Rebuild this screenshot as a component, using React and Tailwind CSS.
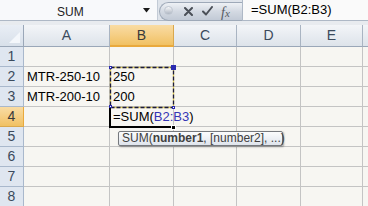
import React from "react";

const font = { fontFamily: '"Liberation Sans", Arial, sans-serif' };

const cols = [
  { k: "A", w: "w-[86px]" },
  { k: "B", w: "w-[64px]", sel: true },
  { k: "C", w: "w-[63px]" },
  { k: "D", w: "w-[64px]" },
  { k: "E", w: "w-[62px]" },
];

const data = {
  2: { A: "MTR-250-10", B: "250" },
  3: { A: "MTR-200-10", B: "200" },
};

function ColHeader({ c }) {
  return (
    <div
      className={`${c.w} shrink-0 h-full flex items-center justify-center border-r text-[14px] ${
        c.sel
          ? "bg-gradient-to-b from-[#f9dca4] to-[#f1c162] border-[#d9a84e] border-b-2 border-b-[#e9a93c] text-[#3a3a3a]"
          : "bg-gradient-to-b from-[#f3f5f8] to-[#dde3ea] border-[#a9b4c2] border-b border-b-[#9aa7b8] text-[#3b4a5c]"
      }`}
    >
      {c.k}
    </div>
  );
}

function Row({ n }) {
  const sel = n === 4;
  return (
    <div className="flex h-[20px] shrink-0">
      <div
        className={`w-[24px] shrink-0 flex items-center justify-center border-r border-b text-[14px] ${
          sel
            ? "bg-gradient-to-b from-[#f9dca4] to-[#f1c162] border-[#d9a84e] border-r-[#e9a93c] text-[#3a3a3a]"
            : "bg-[#dfe6f0] border-[#a9b8cc] text-[#3b4a5c]"
        }`}
      >
        {n}
      </div>
      {cols.map((c) => (
        <div
          key={c.k}
          className={`${c.w} shrink-0 border-r border-b border-[#c4c4c4] bg-[#f7f6f2] flex items-center px-[3px] text-[13px] text-black whitespace-nowrap overflow-visible relative`}
        >
          {data[n] && data[n][c.k]}
          {n === 4 && c.k === "B" && (
            <span className="relative z-10">
              =SUM(<span className="text-[#3535b5]">B2:B3</span>)
            </span>
          )}
        </div>
      ))}
      <div className="flex-1 border-b border-[#c4c4c4] bg-[#f7f6f2]" />
    </div>
  );
}

export default function App() {
  return (
    <div
      className="w-[368px] h-[206px] overflow-hidden bg-[#e4e8ee] relative flex flex-col"
      style={font}
    >
      {/* formula bar */}
      <div className="h-[21px] flex shrink-0 border-b border-[#aeb8c6] bg-[#dfe4eb]">
        <div className="w-[158px] shrink-0 bg-[#f8f9fb] flex items-center relative border-r border-[#c3cbd6]">
          <span className="absolute left-[57px] top-[3px] text-[12px] text-[#222]">SUM</span>
          <svg className="absolute left-[143px] top-[8px]" width="7" height="5" viewBox="0 0 7 5">
            <path d="M0 0 H7 L3.5 4.5 Z" fill="#1a1a1a" />
          </svg>
        </div>
        <div className="w-[84px] shrink-0 relative flex items-center">
          <div className="absolute left-[1px] top-[2px] bottom-[-1px] right-0 rounded-l-[10px] bg-gradient-to-b from-[#eef1f5] via-[#d3d9e2] to-[#c2cad6] border border-[#9ea9b8] border-r-0" />
          <div className="absolute left-[6px] top-[6px] w-[9px] h-[9px] rounded-full bg-gradient-to-b from-[#f7f8fa] to-[#aeb6c2] border border-[#c0c7d1]" />
          <svg className="absolute left-[26px] top-[7px]" width="9" height="9" viewBox="0 0 9 9">
            <path d="M1 1 L8 8 M8 1 L1 8" stroke="#4a4f57" strokeWidth="2" strokeLinecap="round" />
          </svg>
          <svg className="absolute left-[44px] top-[6px]" width="11" height="10" viewBox="0 0 11 10">
            <path d="M1 5.5 L4 8.5 L10 1" stroke="#4a4f57" strokeWidth="2" fill="none" strokeLinecap="round" strokeLinejoin="round" />
          </svg>
          <span
            className="absolute left-[63px] top-[2px] text-[14px] italic text-[#555a63]"
            style={{ fontFamily: '"Liberation Serif", "Times New Roman", serif' }}
          >
            f<span className="text-[11px]">x</span>
          </span>
        </div>
        <div className="flex-1 bg-[#fafafa] flex items-center pl-[8px] text-[13px] text-black border-l border-[#aeb8c6]">
          =SUM(B2:B3)
        </div>
      </div>
      <div className="h-[4px] shrink-0 bg-[#e8ebef]" />
      {/* column headers */}
      <div className="h-[22px] flex shrink-0">
        <div className="w-[24px] shrink-0 h-full bg-gradient-to-b from-[#e9eef5] to-[#d8e0ea] border-r border-b border-[#9aa7b8] relative">
          <svg className="absolute right-[3px] bottom-[3px]" width="11" height="11" viewBox="0 0 11 11">
            <path d="M11 0 V11 H0 Z" fill="#f4f7fb" />
          </svg>
        </div>
        {cols.map((c) => (
          <ColHeader key={c.k} c={c} />
        ))}
        <div className="flex-1 bg-gradient-to-b from-[#f3f5f8] to-[#dde3ea] border-b border-[#9aa7b8]" />
      </div>
      {[1, 2, 3, 4, 5, 6, 7, 8].map((n) => (
        <Row key={n} n={n} />
      ))}

      {/* marching ants around B2:B3 */}
      <svg className="absolute left-[109px] top-[66px]" width="67" height="43" viewBox="0 0 67 43">
        <rect x="1.5" y="1.5" width="63" height="40" fill="none" stroke="#e6d25a" strokeWidth="1.3" />
        <rect x="1.5" y="1.5" width="63" height="40" fill="none" stroke="#1b1b40" strokeWidth="1.3" strokeDasharray="4 2" />
      </svg>
      <div className="absolute left-[109px] top-[66px] w-[3px] h-[3px] border border-[#2a2ab0] bg-white" />
      <div className="absolute left-[171px] top-[65px] w-[5px] h-[5px] bg-[#2a2ab0]" />
      <div className="absolute left-[109px] top-[105px] w-[3px] h-[3px] border border-[#2a2ab0] bg-white" />
      <div className="absolute left-[172px] top-[106px] w-[3px] h-[3px] border border-[#2a2ab0] bg-white" />

      {/* active cell B4 */}
      <div className="absolute left-[109px] top-[108px] w-[2px] h-[20px] bg-black" />
      <div className="absolute left-[109px] top-[126px] w-[63px] h-[2px] bg-black" />
      <div className="absolute left-[171px] top-[125px] w-[5px] h-[5px] bg-black border border-white" />

      {/* tooltip */}
      <div className="absolute left-[118px] top-[131px] w-[165px] h-[15px] rounded-[2px] border border-[#76797e] bg-gradient-to-b from-[#fbfcfd] to-[#dfe4ec] shadow-[1px_1px_2px_rgba(0,0,0,0.35)] flex items-center pl-[3px] text-[12px] leading-[13px] text-[#404040] whitespace-nowrap">
        SUM(<span className="font-bold">number1</span>, [number2], ...)
      </div>
    </div>
  );
}
